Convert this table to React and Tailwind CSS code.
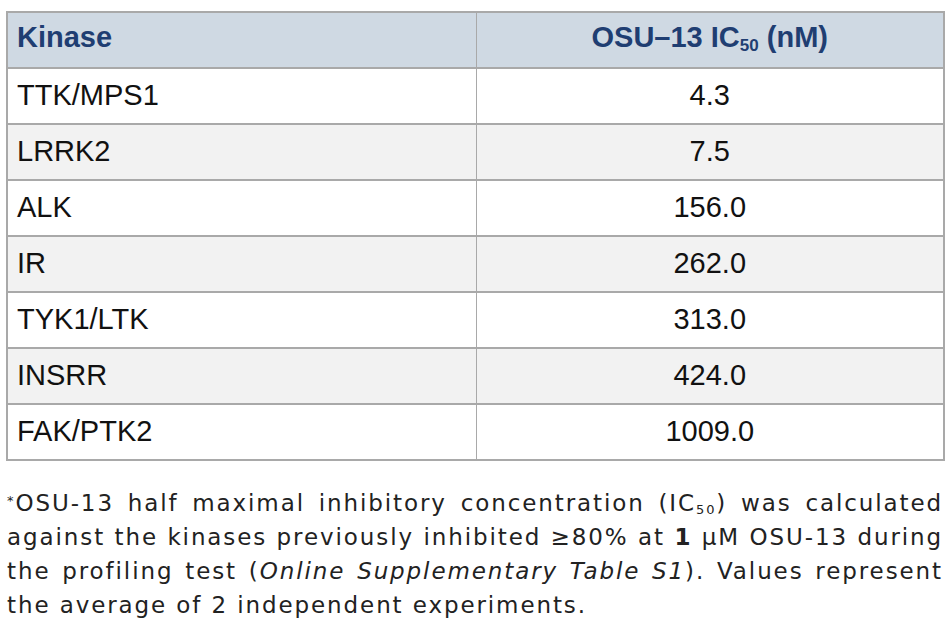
export default function App() {
  const rows = [
    ["TTK/MPS1", "4.3"],
    ["LRRK2", "7.5"],
    ["ALK", "156.0"],
    ["IR", "262.0"],
    ["TYK1/LTK", "313.0"],
    ["INSRR", "424.0"],
    ["FAK/PTK2", "1009.0"],
  ];
  const sans = { fontFamily: '"Liberation Sans", Arial, sans-serif' };
  return (
    <div className="w-[951px] h-[629px] bg-white overflow-hidden">
      <div className="pt-[11px] pl-[6px] w-[945px]">
        <table className="w-[939px] border-collapse border-2 border-[#a9a9a9] table-fixed" style={sans}>
          <colgroup>
            <col className="w-[469px]" />
            <col />
          </colgroup>
          <thead>
            <tr className="h-[56px] bg-[#cfd9e3] text-[#1f3e72]">
              <th className="text-left font-bold text-[29px] pl-[9px] pb-[4px] border-r border-b-2 border-[#a9a9a9]">Kinase</th>
              <th className="text-center font-bold text-[29px] pb-[4px] border-b-2 border-[#a9a9a9]">
                OSU–13 IC<sub className="text-[17px] relative top-[4px] align-baseline">50</sub> (nM)
              </th>
            </tr>
          </thead>
          <tbody>
            {rows.map((r, i) => (
              <tr key={r[0]} className={"h-[56px] " + (i % 2 === 1 ? "bg-[#f2f2f2]" : "bg-white")}>
                <td className="text-left text-[29px] text-[#111] pl-[9px] border-r border-b-2 border-[#a9a9a9]">{r[0]}</td>
                <td className="text-center text-[29px] text-[#111] border-b-2 border-[#a9a9a9]">{r[1]}</td>
              </tr>
            ))}
          </tbody>
        </table>
        <div
          className="mt-[25px] pl-[1px] w-[937px] text-[23px] leading-[34px] text-[#222] tracking-[1.9px]"
          style={{ fontFamily: '"DejaVu Sans", "Noto Sans", sans-serif' }}
        >
          <div className="text-justify [text-align-last:justify]">
            <sup className="text-[13px]">*</sup>OSU-13 half maximal inhibitory concentration (IC<sub className="text-[13px]">50</sub>) was calculated
          </div>
          <div className="text-justify [text-align-last:justify]">
            against the kinases previously inhibited ≥80% at <span className="font-bold">1</span> μM OSU-13 during
          </div>
          <div className="text-justify [text-align-last:justify]">
            the profiling test (<i>Online Supplementary Table S1</i>). Values represent
          </div>
          <div>the average of 2 independent experiments.</div>
        </div>
      </div>
    </div>
  );
}
